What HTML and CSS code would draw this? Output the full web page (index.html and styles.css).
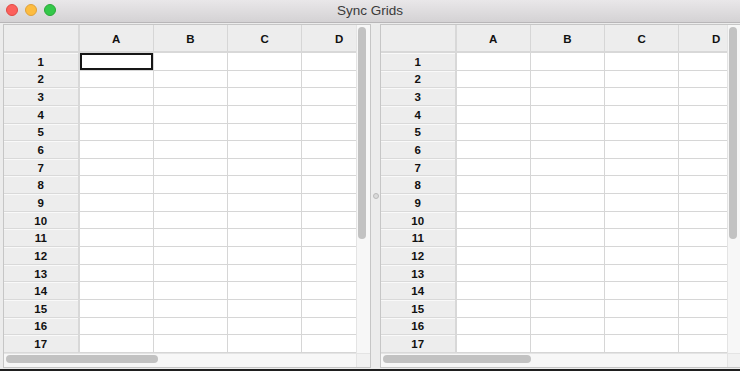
FILE: index.html
```html
<!DOCTYPE html>
<html lang="en">
<head>
  <meta charset="UTF-8">
  <title>Sync Grids</title>
  <link rel="stylesheet" href="styles.css">
</head>
<body>

  <div class="window">
    <div class="titlebar">
      <div class="lights">
        <span class="light red"></span>
        <span class="light yellow"></span>
        <span class="light green"></span>
      </div>
      <div class="title">Sync Grids</div>
      <div></div>
    </div>

    <div class="content">
      <div class="pane pane-left">
        <div class="pane-body">
          <div class="viewport"><div class="grid" id="gridLeft"></div></div>
          <div class="vscroll"><div class="vthumb"></div></div>
        </div>
        <div class="hscroll">
          <div class="htrack"><div class="hthumb"></div></div>
          <div class="scroll-corner"></div>
        </div>
      </div>

      <div class="splitter"><span class="splitter-dot"></span></div>

      <div class="pane pane-right">
        <div class="pane-body">
          <div class="viewport"><div class="grid" id="gridRight"></div></div>
          <div class="vscroll"><div class="vthumb"></div></div>
        </div>
        <div class="hscroll">
          <div class="htrack"><div class="hthumb right"></div></div>
          <div class="scroll-corner"></div>
        </div>
      </div>
    </div>
  </div>

  <script>
    const columns = ["A", "B", "C", "D"];

    function buildGrid(id, selected) {
      const grid = document.getElementById(id);
      let html = '<div class="cell corner"></div>';
      columns.forEach(col => {
        html += `<div class="cell col-head">${col}</div>`;
      });
      for (let row = 1; row <= 17; row++) {
        html += `<div class="cell row-head">${row}</div>`;
        columns.forEach((col, i) => {
          const sel = selected && row === 1 && i === 0 ? " sel" : "";
          html += `<div class="cell${sel}"></div>`;
        });
      }
      grid.innerHTML = html;
    }

    buildGrid("gridLeft", true);
    buildGrid("gridRight", false);
  </script>

</body>
</html>
```

FILE: styles.css
```css
body {
  margin: 0;
  background-color: #1f1f1f;
  width: 740px;
  height: 371px;
  overflow: hidden;
  font-family: 'Liberation Sans', Arial, sans-serif;
}

.window {
  width: 740px;
  height: 369px;
  background-color: #ececec;
  display: flex;
  flex-direction: column;
  overflow: hidden;
}

.titlebar {
  height: 22px;
  flex: none;
  display: grid;
  grid-template-columns: 1fr auto 1fr;
  align-items: center;
  background: linear-gradient(#e9e7e9, #d4d2d4);
  border-bottom: 1px solid #b8b6b8;
}

.lights {
  display: flex;
  gap: 7px;
  padding-left: 6px;
  margin-top: -2px;
}

.light {
  width: 12px;
  height: 12px;
  border-radius: 50%;
  box-sizing: border-box;
}

.red {
  background-color: #fc605c;
  border: 1px solid #e04a45;
}

.yellow {
  background-color: #fdbc40;
  border: 1px solid #dfa13a;
}

.green {
  background-color: #34c84a;
  border: 1px solid #2aa838;
}

.title {
  font-size: 13.5px;
  color: #3a3a3a;
  margin-top: -2px;
}

.content {
  flex: 1;
  min-height: 0;
  display: flex;
  padding: 1px 0 0 3px;
}

.pane {
  height: 344px;
  flex: none;
  box-sizing: border-box;
  border: 1px solid #c6c6c6;
  display: flex;
  flex-direction: column;
  overflow: hidden;
  background-color: #fff;
}

.pane-left {
  width: 368px;
}

.pane-right {
  width: 362px;
}

.pane-body {
  flex: 1;
  min-height: 0;
  display: flex;
}

.viewport {
  flex: 1;
  overflow: hidden;
}

.grid {
  display: grid;
  grid-template-columns: 75.5px repeat(4, 74.3px);
  grid-template-rows: 28px;
  grid-auto-rows: 17.65px;
  width: max-content;
}

.cell {
  box-sizing: border-box;
  background-color: #fff;
  border-right: 1px solid #d6d6d6;
  border-bottom: 1px solid #d6d6d6;
}

.corner,
.col-head,
.row-head {
  background-color: #ededed;
  display: flex;
  align-items: center;
  justify-content: center;
  font-size: 11.5px;
  font-weight: bold;
  color: #111;
}

.corner,
.col-head {
  border-bottom: 2px solid #d8d8d8;
  padding-top: 1px;
}

.corner,
.row-head {
  border-right: 2px solid #d8d8d8;
}

.row-head {
  border-bottom: 1px solid #d9d9d9;
  box-shadow: inset 0 1px 0 #f9f9f9;
  padding-top: 1px;
}

.sel {
  box-shadow: inset 0 0 0 2px #161616;
}

.vscroll {
  width: 14px;
  flex: none;
  box-sizing: border-box;
  background-color: #f7f7f7;
  border-left: 1px solid #e4e4e4;
  padding: 2px 3px 0 1px;
}

.vthumb {
  width: 8px;
  height: 212px;
  border-radius: 4px;
  background-color: #c2c2c2;
}

.hscroll {
  height: 14px;
  flex: none;
  display: flex;
  box-sizing: border-box;
  background-color: #f7f7f7;
  border-top: 1px solid #e4e4e4;
}

.htrack {
  flex: 1;
  padding: 1px 2px 0 2px;
}

.hthumb {
  width: 152px;
  height: 8px;
  border-radius: 4px;
  background-color: #c2c2c2;
}

.hthumb.right {
  width: 148px;
}

.scroll-corner {
  width: 14px;
  flex: none;
  background-color: #f1f1f1;
  border-left: 1px solid #e4e4e4;
  box-sizing: border-box;
}

.splitter {
  width: 9px;
  height: 344px;
  flex: none;
  display: flex;
  align-items: center;
  justify-content: center;
}

.splitter-dot {
  width: 6px;
  height: 6px;
  box-sizing: border-box;
  border-radius: 50%;
  background-color: #dadada;
  border: 1px solid #b9b9b9;
}
```
